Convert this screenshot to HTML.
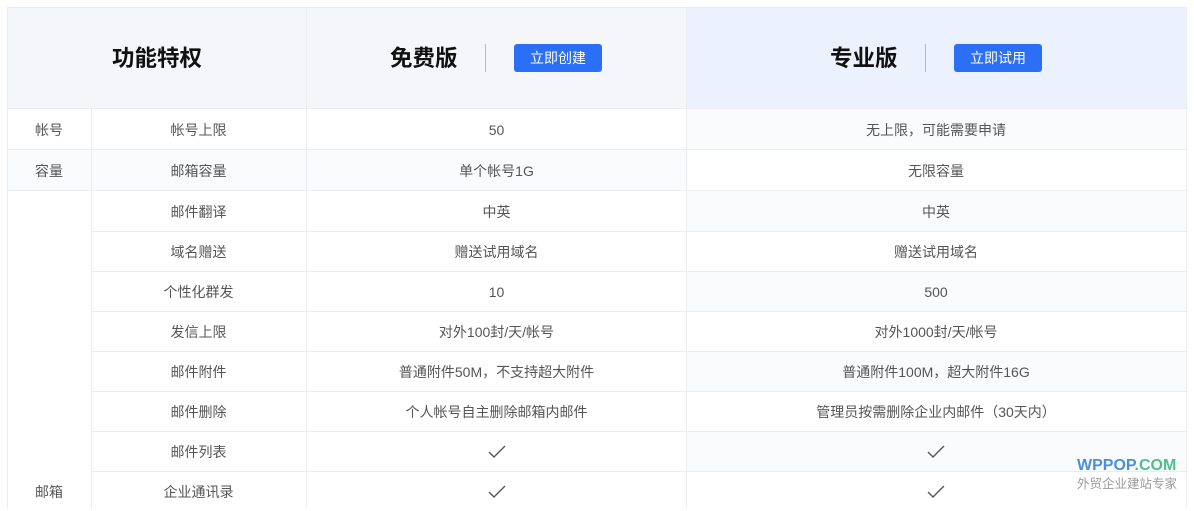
<!DOCTYPE html>
<html><head><meta charset="utf-8"><style>
body{margin:0;width:1194px;height:508px;overflow:hidden;background:#fff;font-family:"Liberation Sans","Noto Sans CJK SC",sans-serif;}
.h{position:absolute;top:8px;height:100px;}
.cell{position:absolute;display:flex;align-items:center;justify-content:center;font-size:14px;color:#555;padding-top:2px;box-sizing:border-box;}
.ln{position:absolute;background:#ebedf0;}
.btn{position:absolute;background:#2b6ff6;color:#fff;font-size:14px;border-radius:3px;display:flex;align-items:center;justify-content:center;width:88px;height:28px;top:44px;}
.ttl{position:absolute;font-size:22.5px;font-weight:bold;color:#111;top:44px;line-height:30px;}
.chk{width:18px;height:14px}
</style></head><body>
<div class="h" style="left:7px;width:300px;background:#f5f6fa"></div>
<div class="h" style="left:307px;width:379px;background:#f5f6fa"></div>
<div class="h" style="left:686px;width:500px;background:#ebf1fd"></div>
<div class="ln" style="left:7px;top:7px;width:1180px;height:1px"></div>
<div class="ttl" style="left:112px">功能特权</div>
<div class="ttl" style="left:390px">免费版</div>
<div style="position:absolute;left:485px;top:44px;width:1px;height:28px;background:#bbb"></div>
<div class="btn" style="left:514px">立即创建</div>
<div class="ttl" style="left:830px">专业版</div>
<div style="position:absolute;left:925px;top:44px;width:1px;height:28px;background:#bbb"></div>
<div class="btn" style="left:954px">立即试用</div>

<div style="position:absolute;left:686px;top:108px;width:500px;height:41px;background:#fafbfd"></div>
<div style="position:absolute;left:7px;top:149px;width:679px;height:41px;background:#fafbfd"></div>
<div style="position:absolute;left:686px;top:190px;width:500px;height:41px;background:#fafbfd"></div>
<div style="position:absolute;left:686px;top:271px;width:500px;height:40px;background:#fafbfd"></div>
<div style="position:absolute;left:686px;top:351px;width:500px;height:40px;background:#fafbfd"></div>
<div style="position:absolute;left:686px;top:431px;width:500px;height:40px;background:#fafbfd"></div>

<div class="ln" style="left:7px;top:7px;width:1px;height:501px"></div>
<div class="ln" style="left:91px;top:108px;width:1px;height:400px"></div>
<div class="ln" style="left:306px;top:7px;width:1px;height:501px"></div>
<div class="ln" style="left:686px;top:7px;width:1px;height:501px"></div>
<div class="ln" style="left:1186px;top:7px;width:1px;height:501px"></div>
<div class="ln" style="left:7px;top:108px;width:1180px;height:1px"></div>
<div class="ln" style="left:7px;top:149px;width:1180px;height:1px"></div>
<div class="ln" style="left:7px;top:190px;width:1180px;height:1px"></div>
<div class="ln" style="left:91px;top:231px;width:1096px;height:1px"></div>
<div class="ln" style="left:91px;top:271px;width:1096px;height:1px"></div>
<div class="ln" style="left:91px;top:311px;width:1096px;height:1px"></div>
<div class="ln" style="left:91px;top:351px;width:1096px;height:1px"></div>
<div class="ln" style="left:91px;top:391px;width:1096px;height:1px"></div>
<div class="ln" style="left:91px;top:431px;width:1096px;height:1px"></div>
<div class="ln" style="left:91px;top:471px;width:1096px;height:1px"></div>

<div class="cell" style="left:7px;top:108px;width:84px;height:41px">帐号</div>
<div class="cell" style="left:7px;top:149px;width:84px;height:41px">容量</div>
<div class="cell" style="left:7px;top:471px;width:84px;height:40px">邮箱</div>

<div class="cell" style="left:91px;top:108px;width:215px;height:41px">帐号上限</div>
<div class="cell" style="left:307px;top:108px;width:379px;height:41px">50</div>
<div class="cell" style="left:686px;top:108px;width:500px;height:41px">无上限，可能需要申请</div>

<div class="cell" style="left:91px;top:149px;width:215px;height:41px">邮箱容量</div>
<div class="cell" style="left:307px;top:149px;width:379px;height:41px">单个帐号1G</div>
<div class="cell" style="left:686px;top:149px;width:500px;height:41px">无限容量</div>

<div class="cell" style="left:91px;top:190px;width:215px;height:41px">邮件翻译</div>
<div class="cell" style="left:307px;top:190px;width:379px;height:41px">中英</div>
<div class="cell" style="left:686px;top:190px;width:500px;height:41px">中英</div>

<div class="cell" style="left:91px;top:231px;width:215px;height:40px">域名赠送</div>
<div class="cell" style="left:307px;top:231px;width:379px;height:40px">赠送试用域名</div>
<div class="cell" style="left:686px;top:231px;width:500px;height:40px">赠送试用域名</div>

<div class="cell" style="left:91px;top:271px;width:215px;height:40px">个性化群发</div>
<div class="cell" style="left:307px;top:271px;width:379px;height:40px">10</div>
<div class="cell" style="left:686px;top:271px;width:500px;height:40px">500</div>

<div class="cell" style="left:91px;top:311px;width:215px;height:40px">发信上限</div>
<div class="cell" style="left:307px;top:311px;width:379px;height:40px">对外100封/天/帐号</div>
<div class="cell" style="left:686px;top:311px;width:500px;height:40px">对外1000封/天/帐号</div>

<div class="cell" style="left:91px;top:351px;width:215px;height:40px">邮件附件</div>
<div class="cell" style="left:307px;top:351px;width:379px;height:40px">普通附件50M，不支持超大附件</div>
<div class="cell" style="left:686px;top:351px;width:500px;height:40px">普通附件100M，超大附件16G</div>

<div class="cell" style="left:91px;top:391px;width:215px;height:40px">邮件删除</div>
<div class="cell" style="left:307px;top:391px;width:379px;height:40px">个人帐号自主删除邮箱内邮件</div>
<div class="cell" style="left:686px;top:391px;width:500px;height:40px">管理员按需删除企业内邮件（30天内）</div>

<div class="cell" style="left:91px;top:431px;width:215px;height:40px">邮件列表</div>
<div class="cell" style="left:307px;top:431px;width:379px;height:40px"><svg class="chk" viewBox="0 0 18 14"><path d="M1 7l5 5L17 1" fill="none" stroke="#555" stroke-width="1.4"/></svg></div>
<div class="cell" style="left:686px;top:431px;width:500px;height:40px"><svg class="chk" viewBox="0 0 18 14"><path d="M1 7l5 5L17 1" fill="none" stroke="#555" stroke-width="1.4"/></svg></div>

<div class="cell" style="left:91px;top:471px;width:215px;height:40px">企业通讯录</div>
<div class="cell" style="left:307px;top:471px;width:379px;height:40px"><svg class="chk" viewBox="0 0 18 14"><path d="M1 7l5 5L17 1" fill="none" stroke="#555" stroke-width="1.4"/></svg></div>
<div class="cell" style="left:686px;top:471px;width:500px;height:40px"><svg class="chk" viewBox="0 0 18 14"><path d="M1 7l5 5L17 1" fill="none" stroke="#555" stroke-width="1.4"/></svg></div>

<div style="position:absolute;left:1077px;top:457px;font-size:16px;font-weight:bold;line-height:18px"><span style="color:#4a8fdc">WPPOP</span><span style="color:#4cbf8c">.COM</span></div>
<div style="position:absolute;left:1077px;top:476px;font-size:12.5px;color:#999;line-height:16px">外贸企业建站专家</div>
</body></html>
